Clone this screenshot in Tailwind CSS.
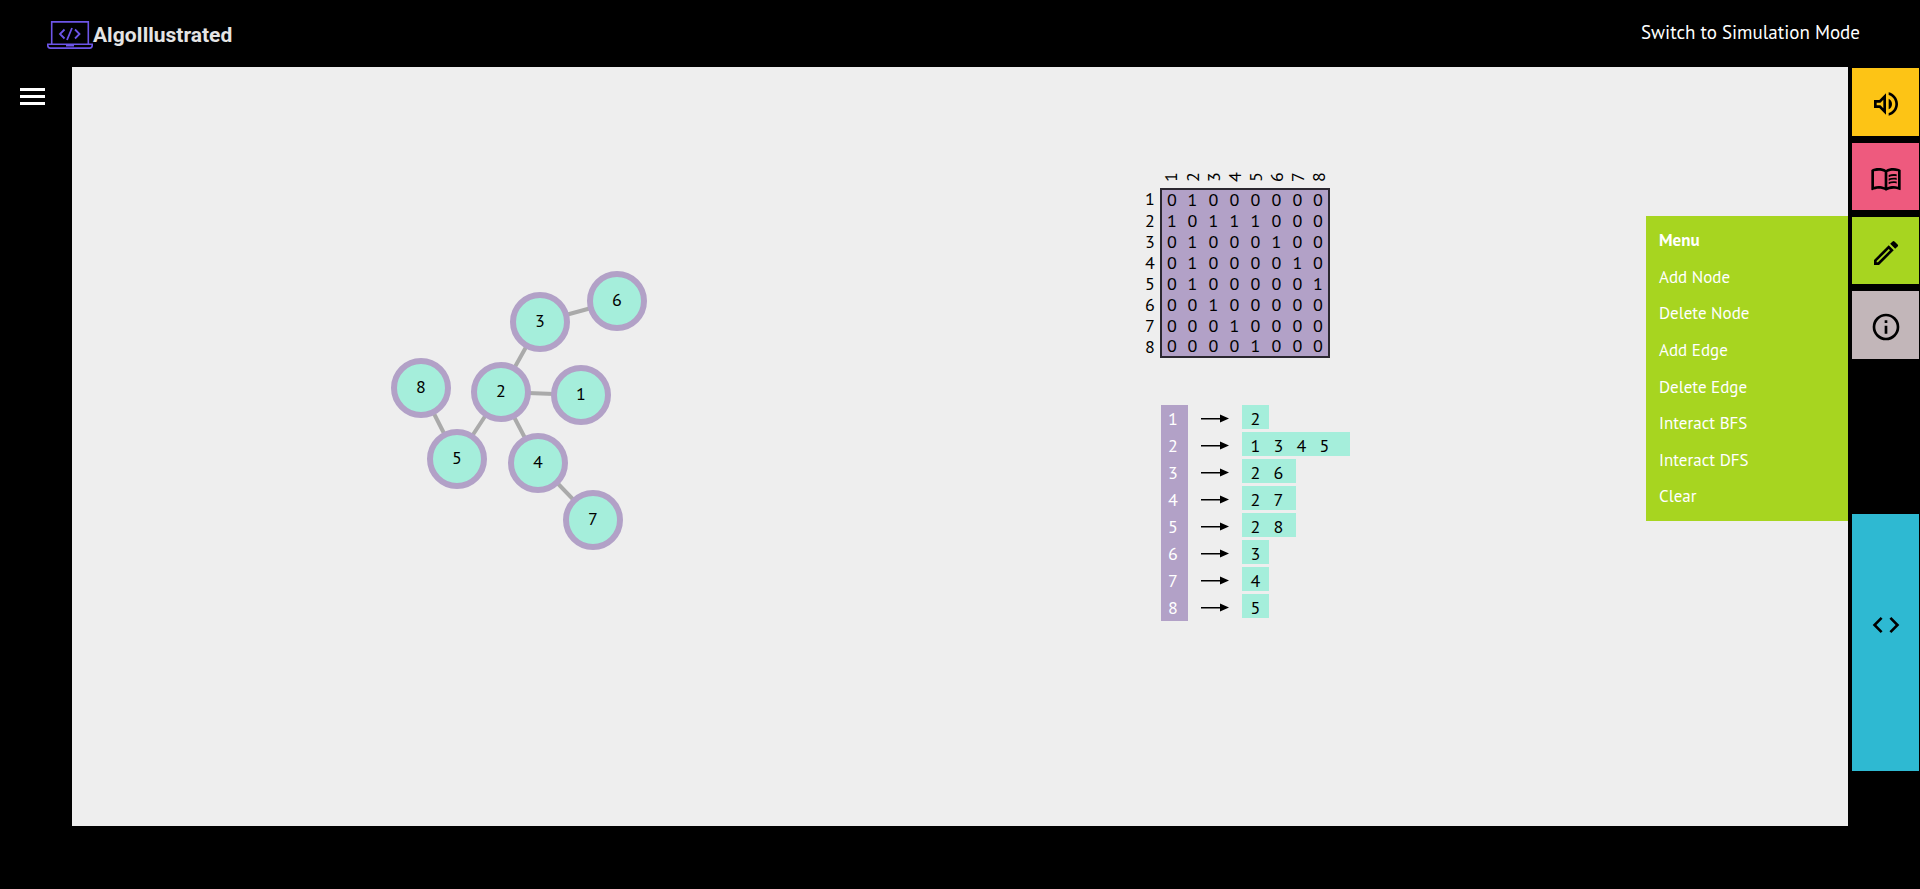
<!DOCTYPE html>
<html lang="en">
<head>
<meta charset="utf-8">
<title>AlgoIllustrated</title>
<script src="https://cdn.jsdelivr.net/npm/@tailwindcss/browser@4"></script>
</head>
<body class="flex min-h-screen flex-col bg-black pb-[63px] font-['PT_Sans','Lato',sans-serif] text-lg text-black">
<header class="flex h-[67px] items-center justify-between pr-[60px] pl-[47px] text-white">
  <a href="#" class="flex items-center pt-[3px] text-[#e4e4e4]">
    <svg class="h-[28px] w-[46px]" viewBox="0 0 46 28" fill="none" stroke="#6d55e8" stroke-width="1.6" aria-hidden="true">
      <path d="M4.7 23V.9h36.6V23M.8 23.2h44.4v1.300q0 2.600-2.600 2.600H3.400q-2.600 0-2.600-2.600zM19 24.600h8"/>
      <path d="m17.500 8.500-4.500 4.500 4.500 4.500M28 8.500l4.500 4.500-4.500 4.500M25 7l-5 12" stroke-width="1.800"/>
    </svg>
    <span class="font-['Roboto',sans-serif] text-[21px] leading-7 font-bold">AlgoIllustrated</span>
  </a>
  <button type="button" class="pb-[3px] text-[19px] leading-6">Switch to Simulation Mode</button>
</header>

<div class="flex flex-1">
  <nav class="flex w-[72px] flex-col pt-[21px] pl-5">
    <button type="button" aria-label="Open navigation" class="w-[25px] text-white">
      <svg class="h-[17px] w-[25px]" viewBox="0 0 25 17" fill="currentColor"><path d="M0 0h25v3H0zm0 7h25v3H0zm0 7h25v3H0z"/></svg>
    </button>
  </nav>

  <main class="relative flex flex-1 bg-[#eee]">
    <section aria-label="Graph" class="w-[1071px]">
      <svg class="h-[759px] w-full" viewBox="72 67 1071 759" preserveAspectRatio="xMinYMin">
        <g stroke="#aaa" stroke-width="4">
          <path d="M540 322 617 301M501 392 540 322M501 392 581 395M501 392 457 459M501 392 538 463M421 388 457 459M538 463 593 520"/>
        </g>
        <g fill="#a5eedb" stroke="#b2a1c7" stroke-width="6">
          <circle cx="581" cy="395" r="27"/><circle cx="501" cy="392" r="27"/><circle cx="540" cy="322" r="27"/><circle cx="538" cy="463" r="27"/><circle cx="457" cy="459" r="27"/><circle cx="617" cy="301" r="27"/><circle cx="593" cy="520" r="27"/><circle cx="421" cy="388" r="27"/>
        </g>
        <g text-anchor="middle" font-size="18">
          <text x="581" y="400">1</text><text x="501" y="397">2</text><text x="540" y="327">3</text><text x="538" y="468">4</text><text x="457" y="464">5</text><text x="617" y="306">6</text><text x="593" y="525">7</text><text x="421" y="393">8</text>
        </g>
      </svg>
    </section>

    <section aria-label="Representations" class="flex flex-1 flex-col items-start gap-[47px] pt-[98px]">
      <table id="matrix" class="border-separate border-spacing-0 text-center leading-5"></table>
      <ul id="adjacency" class="ml-[18px] leading-[27px]"></ul>
    </section>

    <aside class="absolute top-[149px] right-0 flex h-[305px] w-[202px] flex-col bg-[#a7d520] py-[6px] pl-[13px] text-[17px] text-white">
      <h2 class="flex flex-1 items-center font-bold">Menu</h2>
      <button type="button" class="flex flex-1 items-center">Add Node</button>
      <button type="button" class="flex flex-1 items-center">Delete Node</button>
      <button type="button" class="flex flex-1 items-center">Add Edge</button>
      <button type="button" class="flex flex-1 items-center">Delete Edge</button>
      <button type="button" class="flex flex-1 items-center">Interact BFS</button>
      <button type="button" class="flex flex-1 items-center">Interact DFS</button>
      <button type="button" class="flex flex-1 items-center">Clear</button>
    </aside>
  </main>

  <nav aria-label="Tools" class="flex w-[72px] flex-col gap-[7px] pt-px pr-px pl-1">
    <button type="button" aria-label="Sound" class="flex h-[68px] items-center justify-center bg-[#fdc415] pt-1">
      <svg class="size-8" viewBox="0 0 24 24"><path d="M3 9v6h4l5 5V4L7 9zm7-.17v6.340L7.830 13H5v-2h2.830zM16.500 12A4.500 4.500 0 0 0 14 7.970v8.050A4.470 4.470 0 0 0 16.500 12M14 3.230v2.060c2.890.860 5 3.540 5 6.710s-2.110 5.850-5 6.710v2.060c4.010-.910 7-4.490 7-8.770s-2.990-7.860-7-8.770"/></svg>
    </button>
    <button type="button" aria-label="Lesson" class="flex h-[67px] items-center justify-center bg-[#ee5a7e] pt-0.5">
      <svg class="size-8" viewBox="0 0 24 24"><path d="M21 5c-1.110-.350-2.330-.500-3.500-.500-1.950 0-4.050.400-5.500 1.500-1.450-1.100-3.550-1.500-5.500-1.500S2.450 4.900 1 6v14.650c0 .250.250.500.500.500.100 0 .150-.050.250-.050C3.100 20.450 5.050 20 6.500 20c1.950 0 4.050.400 5.500 1.500 1.350-.850 3.800-1.500 5.500-1.500 1.650 0 3.350.300 4.750 1.050.100.050.150.050.250.050.250 0 .500-.250.500-.500V6c-.600-.450-1.250-.750-2-1M3 18.500V7c1.100-.350 2.300-.500 3.500-.500 1.340 0 3.130.410 4.500.990v11.500C9.630 18.410 7.840 18 6.500 18c-1.200 0-2.400.150-3.500.500m18 0c-1.100-.350-2.300-.500-3.500-.500-1.340 0-3.130.410-4.500.990V7.490c1.370-.590 3.160-.990 4.500-.990 1.200 0 2.400.150 3.500.500zM17.500 10.500c.880 0 1.730.090 2.500.260V9.240a12 12 0 0 0-6 .510v1.600c1.090-.550 2.270-.850 3.500-.850m0 2.660c.880 0 1.730.090 2.500.260V11.900a12 12 0 0 0-6 .510v1.600c1.090-.550 2.270-.850 3.500-.850m0 2.670c.880 0 1.730.090 2.500.260v-1.520a12 12 0 0 0-6 .510v1.600c1.090-.560 2.270-.850 3.500-.850"/></svg>
    </button>
    <button type="button" aria-label="Edit" class="flex h-[67px] items-center justify-center bg-[#a7d520] pt-1">
      <svg class="size-8" viewBox="0 0 24 24"><path d="m14.060 9.020.920.920L5.920 19H5v-.920zM17.660 3a1 1 0 0 0-.700.290l-1.830 1.830 3.750 3.750 1.830-1.830a1 1 0 0 0 0-1.410l-2.340-2.340a1 1 0 0 0-.710-.290m-3.600 3.190L3 17.250V21h3.750L17.810 9.940z"/></svg>
    </button>
    <button type="button" aria-label="Information" class="flex h-[68px] items-center justify-center bg-[#c2b6b9] pt-1">
      <svg class="size-8" viewBox="0 0 24 24"><path d="M11 7h2v2h-2zm0 4h2v6h-2zm1-9a10 10 0 1 0 0 20 10 10 0 0 0 0-20m0 18a8 8 0 1 1 0-16 8 8 0 0 1 0 16"/></svg>
    </button>
    <button type="button" aria-label="Code" class="mt-[148px] flex h-[257px] items-center justify-center bg-[#2eb9d2] pb-9">
      <svg class="size-8" viewBox="0 0 24 24"><path d="M9.400 16.600 4.800 12l4.600-4.600L8 6l-6 6 6 6zm5.200 0 4.600-4.600-4.600-4.600L16 6l6 6-6 6z"/></svg>
    </button>
  </nav>
</div>

<script>
  // Neighbours of nodes 1..8; both representations are built from this.
  const neighbours = [[2], [1, 3, 4, 5], [2, 6], [2, 7], [2, 8], [3], [4], [5]];
  const ids = neighbours.map((_, i) => i + 1);

  document.getElementById('matrix').innerHTML =
    '<thead><tr><td class="h-[23px] p-0"><div class="w-[17px]"></div></td>' +
    ids.map(n => `<th scope="col" class="h-[23px] p-0 font-normal"><span class="block -rotate-90">${n}</span></th>`).join('') +
    '</tr></thead><tbody>' +
    neighbours.map((list, r) => {
      const edgeRow = r === 0 || r === 7;
      const top = r === 0 ? 'border-t-2' : '', bottom = r === 7 ? 'border-b-2' : '';
      return `<tr class="${edgeRow ? 'h-[22px]' : 'h-[21px]'}"><th scope="row" class="p-0 pr-[3px] font-normal">${r + 1}</th>` + ids.map((n, c) =>
        `<td class="border-[#2b2830] bg-[#b2a1c7] p-0 ${top} ${bottom} ${c === 0 ? 'border-l-2' : ''} ${c === 7 ? 'border-r-2' : ''}"><div class="${c === 0 || c === 7 ? 'w-5' : 'w-[21px]'}">${list.includes(n) ? 1 : 0}</div></td>`
      ).join('') + '</tr>';
    }).join('') + '</tbody>';

  document.getElementById('adjacency').innerHTML = neighbours.map((list, r) =>
    `<li class="flex h-[27px] items-start">
      <span class="h-[27px] w-[27px] bg-[#b2a1c7] pr-[3px] text-center text-white">${r + 1}</span>
      <svg class="ml-[13px] h-[27px] w-[28px]" viewBox="0 0 28 27"><path d="M0 13h20v1.500H0zM19 9.500l9 4-9 4z"/></svg>
      <span class="ml-[13px] flex h-6 bg-[#a5eedb] pl-[2px]" style="width:${list.length * 27}px">${list.map(n => `<span class="w-[23px] text-center">${n}</span>`).join('')}</span>
    </li>`).join('');
</script>
</body>
</html>
